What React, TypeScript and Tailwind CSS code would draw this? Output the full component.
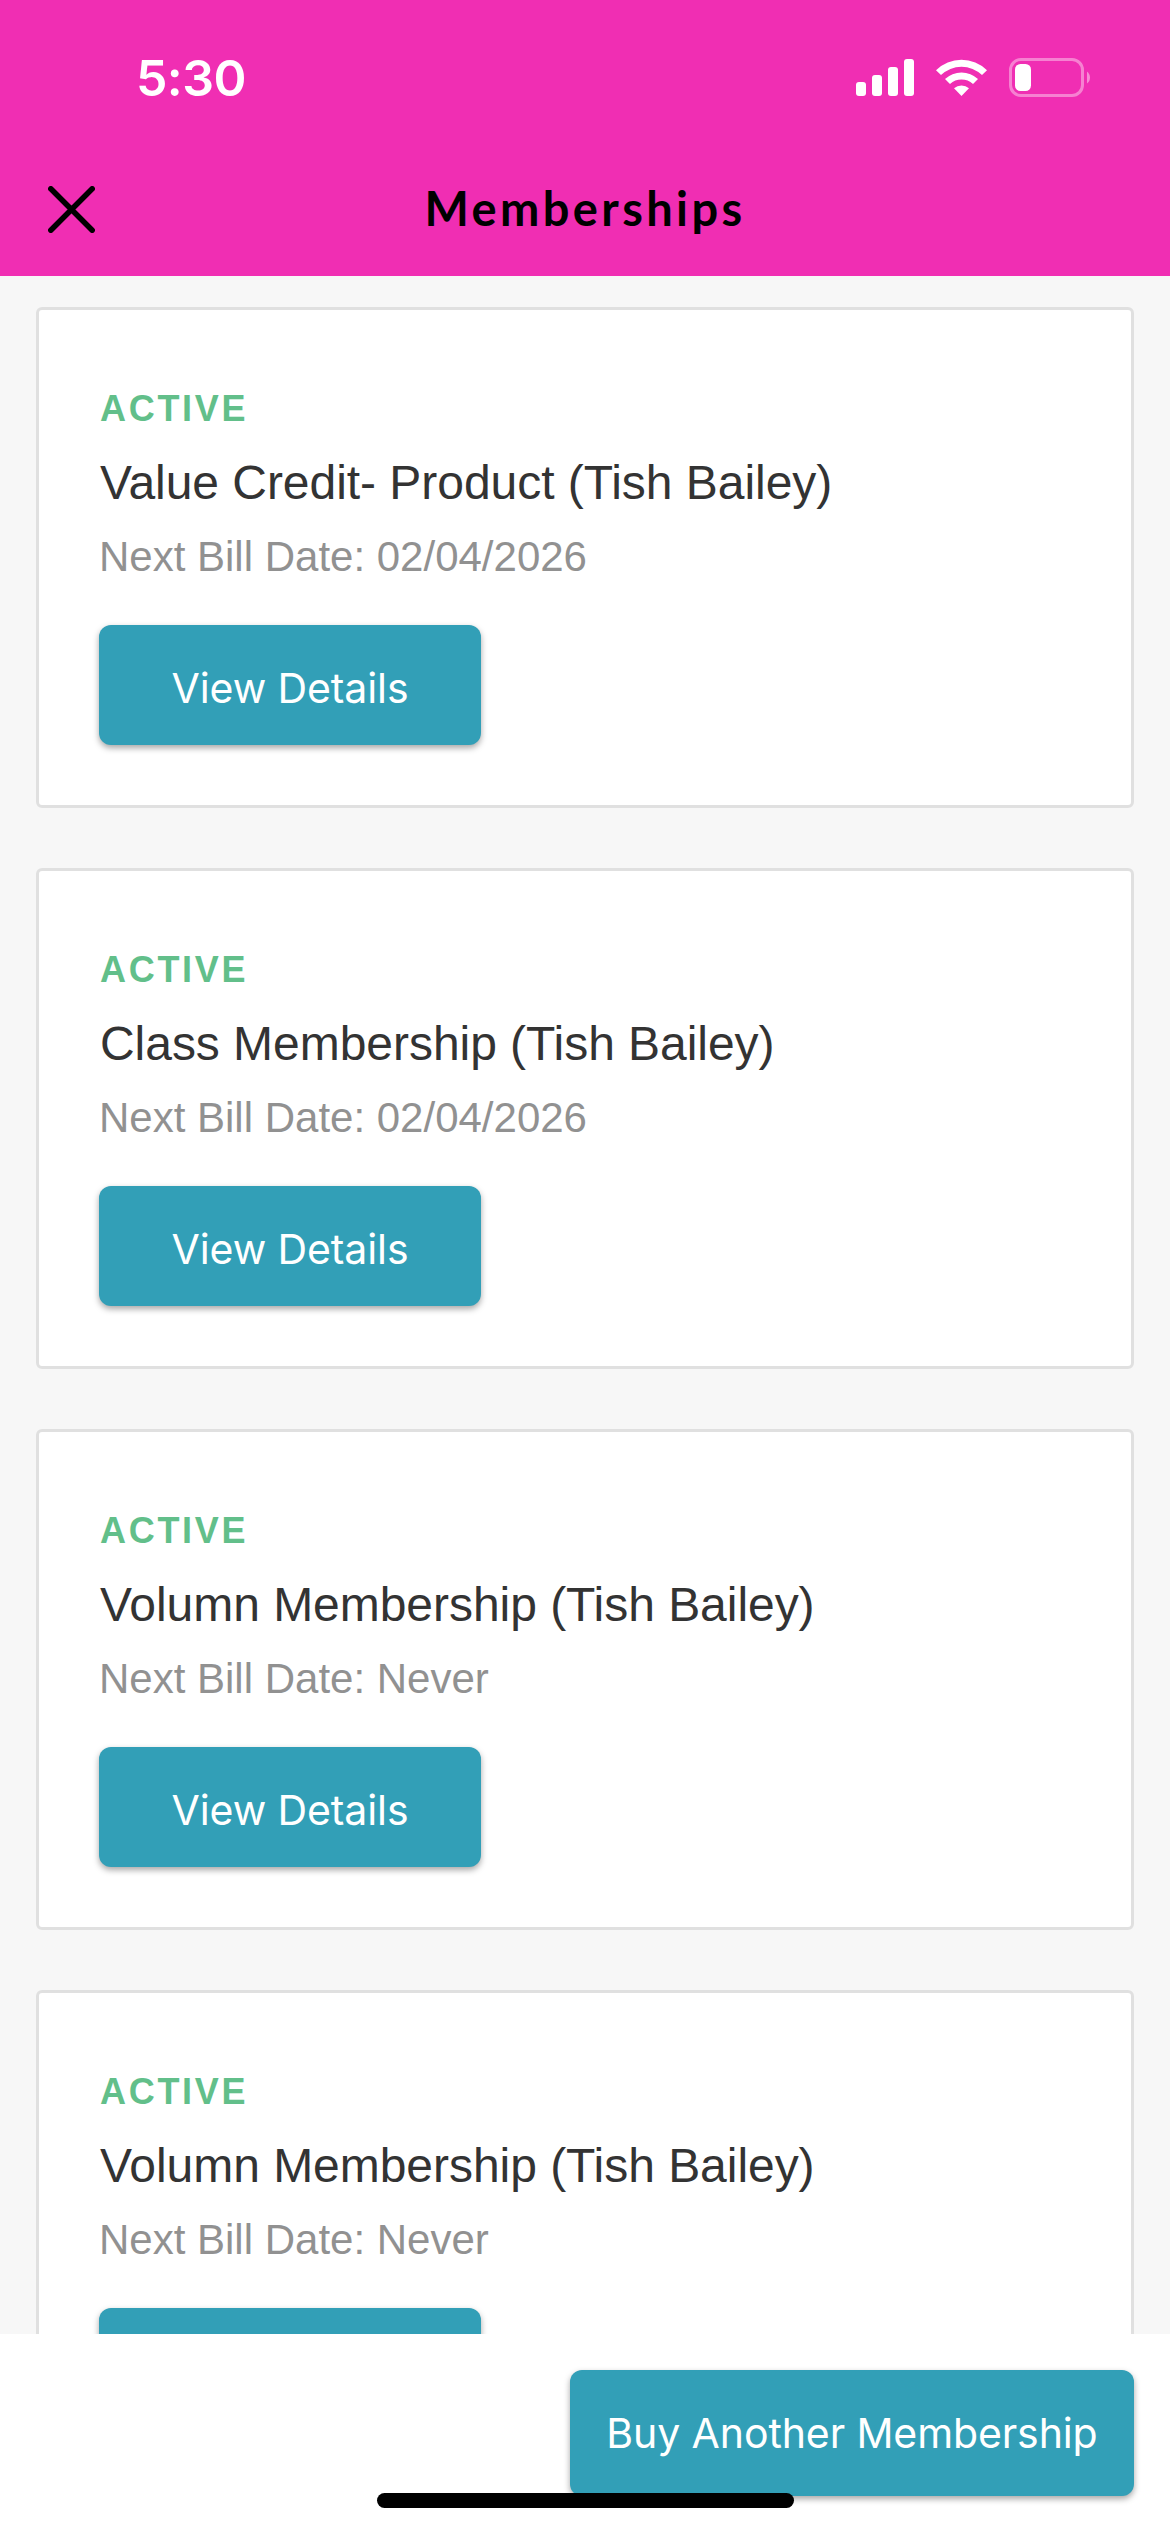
type Membership = {
  id: number;
  name: string;
  nextBill: string;
};

const MEMBERSHIPS: Membership[] = [
  { id: 1, name: "Value Credit- Product (Tish Bailey)", nextBill: "02/04/2026" },
  { id: 2, name: "Class Membership (Tish Bailey)", nextBill: "02/04/2026" },
  { id: 3, name: "Volumn Membership (Tish Bailey)", nextBill: "Never" },
  { id: 4, name: "Volumn Membership (Tish Bailey)", nextBill: "Never" },
];

function StatusBar() {
  return (
    <div className="flex h-[156px] items-center justify-between pl-[136px] pr-[78px]">
      <span className="font-['Inter',sans-serif] text-[50px] font-semibold leading-[60px] tracking-[-0.6px] text-white">
        5:30
      </span>
      <svg width="236" height="40" viewBox="0 0 236 40" fill="none">
        {/* signal */}
        <rect x="0" y="24" width="10" height="14" rx="3" fill="white" />
        <rect x="16" y="17" width="10" height="21" rx="3" fill="white" />
        <rect x="32" y="9" width="10" height="29" rx="3" fill="white" />
        <rect x="48" y="1" width="10" height="37" rx="3" fill="white" />
        {/* wifi */}
        <path d="M80 12.2A36.5 36.5 0 0 1 131 12.2L126 17.1A29.3 29.3 0 0 0 85 17.1Z" fill="white" />
        <path d="M89 21A24 24 0 0 1 122 21L117 26A17 17 0 0 0 94 26Z" fill="white" />
        <path d="M98 30.2A11.5 11.5 0 0 1 113 30.2L105.5 38Z" fill="white" />
        {/* battery */}
        <rect x="154.5" y="1.5" width="72" height="36" rx="10.5" stroke="white" strokeOpacity="0.4" strokeWidth="3" />
        <rect x="159" y="6" width="16" height="27" rx="5.5" fill="white" />
        <path d="M231 13.5A7.5 7.5 0 0 1 231 25.5Z" fill="white" fillOpacity="0.45" />
      </svg>
    </div>
  );
}

function Header() {
  return (
    <header className="h-[276px] shrink-0 bg-[#f02eb3]">
      <StatusBar />
      <div className="grid h-[106px] grid-cols-[95px_1fr_95px] items-center">
        <button type="button" aria-label="Close" className="pl-12">
          <svg width="47" height="47" viewBox="0 0 47 47" fill="none" stroke="black" strokeWidth="5.5" strokeLinecap="round">
            <path d="M2.8 2.8L44.2 44.2M44.2 2.8L2.8 44.2" />
          </svg>
        </button>
        <h1 className="pb-[3px] text-center font-['Lato',sans-serif] text-[47px] font-bold leading-[60px] tracking-[3.4px] text-black">
          Memberships
        </h1>
      </div>
    </header>
  );
}

function MembershipCard({ membership }: { membership: Membership }) {
  return (
    <article className="h-[501px] shrink-0 rounded-md border-[3px] border-[#e0e0e0] bg-white p-[60px] font-['Liberation_Sans',sans-serif]">
      <p className="pl-px text-[36px] font-bold leading-[77px] tracking-[2.7px] text-[#62bf8a]">
        ACTIVE
      </p>
      <h2 className="pl-px text-[48px] leading-[71px] tracking-[-0.04px] text-[#333333]">
        {membership.name}
      </h2>
      <p className="text-[42px] leading-[77px] text-[#919191]">
        Next Bill Date: {membership.nextBill}
      </p>
      <button
        type="button"
        className="mt-[30px] flex h-[120px] w-[382px] items-center justify-center rounded-xl bg-[#329fb7] pt-2 font-['Inter',sans-serif] text-[41px] tracking-[-0.1px] text-white shadow-[0_3px_6px_rgba(0,0,0,0.35)]"
      >
        View Details
      </button>
    </article>
  );
}

export default function App() {
  return (
    <div className="relative flex h-[2532px] w-[1170px] flex-col overflow-hidden bg-[#f7f7f7]">
      <Header />

      <main className="flex min-h-0 flex-1 flex-col gap-[60px] overflow-hidden px-9 pt-[31px]">
        {MEMBERSHIPS.map((m) => (
          <MembershipCard key={m.id} membership={m} />
        ))}
      </main>

      <footer className="flex h-[198px] shrink-0 items-start justify-end bg-white px-9 pt-9">
        <button
          type="button"
          className="flex h-[126px] w-[564px] items-center justify-center whitespace-nowrap rounded-xl bg-[#329fb7] pt-0.5 font-['Inter',sans-serif] text-[41px] tracking-[-0.1px] text-white shadow-[0_3px_6px_rgba(0,0,0,0.35)]"
        >
          Buy Another Membership
        </button>
      </footer>

      {/* home indicator */}
      <div className="absolute bottom-6 left-[377px] h-[15px] w-[417px] rounded-full bg-black" />
    </div>
  );
}
